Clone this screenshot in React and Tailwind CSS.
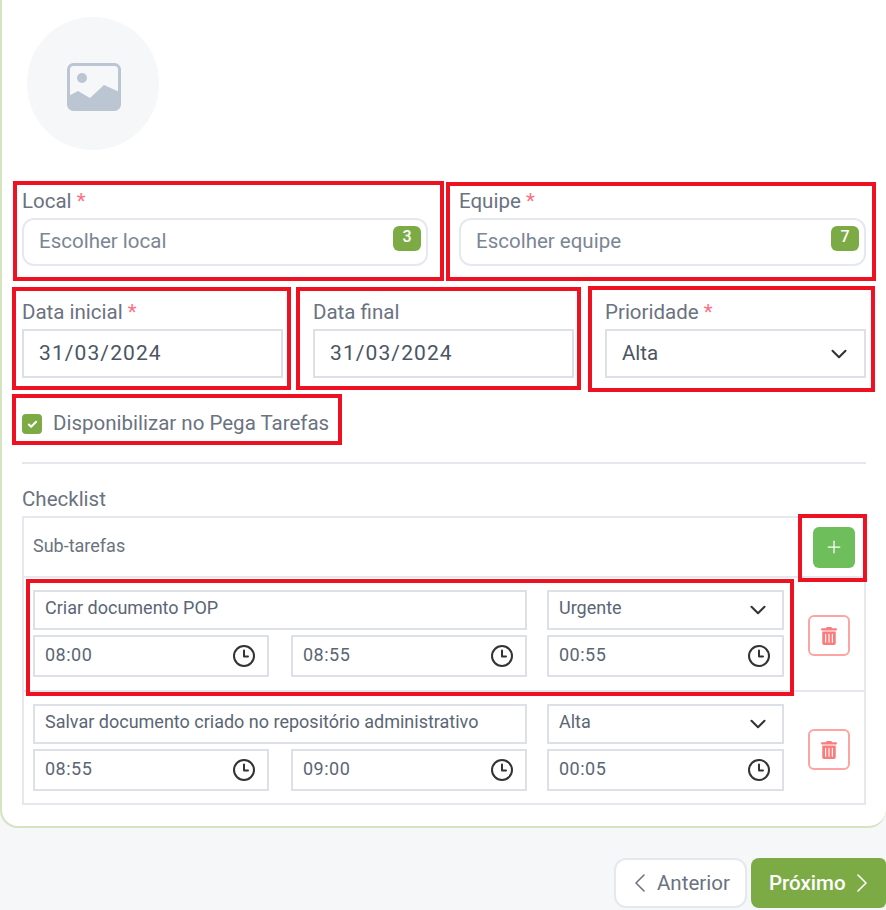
import React from 'react';
import { ChevronDown, ChevronLeft, ChevronRight, Plus, Check } from 'lucide-react';
import { FaTrashAlt } from 'react-icons/fa';

const subTasks = [
  { id: 1, name: 'Criar documento POP', priority: 'Urgente', start: '08:00', end: '08:55', total: '00:55' },
  { id: 2, name: 'Salvar documento criado no repositório administrativo', priority: 'Alta', start: '08:55', end: '09:00', total: '00:05' },
];

const ClockIcon = () => (
  <svg width="24" height="24" viewBox="0 0 24 24" fill="none" stroke="#333" strokeWidth="2" strokeLinecap="round" strokeLinejoin="round">
    <circle cx="12" cy="12" r="10" />
    <path d="M12 6.5v6h4" />
  </svg>
);

const Label = ({ children, required }) => (
  <label className="block h-[30px] pb-[4px] text-[20.5px] leading-[26px] text-[#6b7280]">
    {children} {required && <span className="text-[#fb7185]">*</span>}
  </label>
);

const PickerField = ({ label, placeholder, count }) => (
  <div>
    <Label required>{label}</Label>
    <div className="relative h-[48px] rounded-xl border-2 border-[#e5e9ef] bg-white pl-[15px] text-[20.5px] leading-[42px] text-[#7b8694]">
      {placeholder}
      <span className="absolute right-[5px] top-[6px] flex h-[25px] w-[28px] items-center justify-center rounded-md bg-[#7cab46] pb-[3px] text-[16px] font-medium leading-none text-white">
        {count}
      </span>
    </div>
  </div>
);

const DateField = ({ label, value, required }) => (
  <div>
    <Label required={required}>{label}</Label>
    <div className="h-[49px] border-2 border-[#dde1e7] bg-white pl-[15px] text-[21px] leading-[44px] tracking-[1.1px] text-[#4b5563]">{value}</div>
  </div>
);

const TimeInput = ({ value }) => (
  <div className="flex h-[42px] items-center justify-between border-2 border-[#dde1e7] bg-white pl-[10px] pr-[11px] text-[18px] tracking-[0.5px] text-[#5b6675]">
    <span className="pb-[3px]">{value}</span>
    <ClockIcon />
  </div>
);

const SubTaskRow = ({ task }) => (
  <div className="flex h-[114px] border-t-2 border-[#e5e8ed]">
    <div className="ml-[9px] mt-[12px] w-[751px]">
      <div className="grid grid-cols-[494px_237px] gap-x-[20px]">
        <div className="flex h-[40px] items-center border-2 border-[#dde1e7] pb-[5px] pl-[10px] text-[18px] text-[#5b6675]">{task.name}</div>
        <div className="flex h-[40px] items-center justify-between border-2 border-[#dde1e7] pl-[10px] pr-[11.5px] text-[18px] text-[#5b6675]">
          <span className="pb-[5px]">{task.priority}</span>
          <ChevronDown className="h-[26px] w-[26px] text-[#333]" strokeWidth={1.9} />
        </div>
      </div>
      <div className="mt-[5px] grid grid-cols-[236px_238px_237px] gap-x-[20px]">
        <TimeInput value={task.start} />
        <div className="ml-[2px]">
          <TimeInput value={task.end} />
        </div>
        <TimeInput value={task.total} />
      </div>
    </div>
    <button className="ml-[24px] mt-[37px] flex h-[41px] w-[42px] items-center justify-center rounded-md border-2 border-[#fda4a4] bg-white text-[#fb7c7c]">
      <FaTrashAlt className="h-[18px] w-[16px]" />
    </button>
  </div>
);

const App = () => {
  return (
    <div className="relative h-[910px] w-[886px] overflow-hidden bg-[#f5f7f9]" style={{ fontFamily: 'Roboto, sans-serif' }}>
      <div className="h-[828px] rounded-b-[18px] border-b-2 border-l-2 border-[#d4e4bf] bg-white pl-[20px] pr-[20px] pt-[17px]">
        {/* Foto */}
        <div className="ml-[5px] flex h-[133px] w-[132px] items-center justify-center rounded-full bg-[#f5f7f9]">
          <svg className="ml-[2px] mt-[6px]" width="54" height="48" viewBox="0 0 54 48">
            <rect x="1.5" y="1.5" width="51" height="45" rx="5" fill="none" stroke="#bcc5d2" strokeWidth="3" />
            <circle cx="15" cy="15" r="5" fill="#bcc5d2" />
            <path d="M1.5 33 L11 28 L23 35 L37 22 L52.5 29 V41 a5 5 0 0 1 -5 5 H6.5 a5 5 0 0 1 -5 -5 Z" fill="#bcc5d2" />
          </svg>
        </div>

        <div className="mt-[38px] grid grid-cols-[406px_407px] gap-x-[31px]">
          <PickerField label="Local" placeholder="Escolher local" count="3" />
          <PickerField label="Equipe" placeholder="Escolher equipe" count="7" />
        </div>

        <div className="mt-[33px] grid grid-cols-[261px_261px_262px] gap-x-[30px]">
          <DateField label="Data inicial" value="31/03/2024" required />
          <DateField label="Data final" value="31/03/2024" />
          <div className="pl-[1px]">
            <Label required>Prioridade</Label>
            <div className="flex h-[49px] items-center justify-between border-2 border-[#dde1e7] bg-white pl-[15px] pr-[12.5px] text-[20.5px] text-[#4b5563]">
              Alta
              <ChevronDown className="h-[26px] w-[26px] text-[#333]" strokeWidth={1.9} />
            </div>
          </div>
        </div>

        <div className="mt-[36px] flex h-[20px] items-center">
          <span className="flex h-[20px] w-[20px] items-center justify-center rounded bg-[#7cab46]">
            <Check className="h-[11px] w-[11px] text-white" strokeWidth={4.5} />
          </span>
          <span className="ml-[11px] pb-[2px] text-[20.5px] text-[#6b7280]">Disponibilizar no Pega Tarefas</span>
        </div>

        <hr className="mt-[28px] border-t-2 border-[#e5e8ed]" />

        <div className="mt-[22px] h-[26px] text-[20.5px] leading-[26px] text-[#6b7280]">Checklist</div>

        {/* Sub-tarefas */}
        <div className="mt-[4px] h-[289px] border-2 border-[#e5e8ed]">
          <div className="flex h-[58px] items-center justify-between pl-[9px] pr-[9px]">
            <span className="pb-[4px] text-[18px] text-[#6b7280]">Sub-tarefas</span>
            <button className="flex h-[41px] w-[42px] items-center justify-center rounded-md bg-[#6fbe5c] text-white">
              <Plus className="h-[20px] w-[20px]" strokeWidth={1.5} />
            </button>
          </div>
          {subTasks.map((task) => (
            <SubTaskRow key={task.id} task={task} />
          ))}
        </div>
      </div>

      <div className="flex justify-end pt-[30px]">
        <button className="flex h-[50px] w-[133px] items-center justify-start gap-[1px] rounded-xl border-2 border-[#e5e8ed] bg-white pl-[8px] text-[20.5px] text-[#6b7280]">
          <ChevronLeft className="h-[32px] w-[32px]" strokeWidth={1.2} />
          Anterior
        </button>
        <button className="ml-[4px] flex h-[50px] w-[135px] items-center justify-start rounded-l-lg rounded-r-md bg-[#7cab46] pl-[18px] text-[20.5px] font-medium text-white">
          Próximo
          <ChevronRight className="h-[32px] w-[32px]" strokeWidth={1.2} />
        </button>
      </div>

      {/* marcações em vermelho sobre a tela */}
      <div className="absolute left-[13px] top-[181px] h-[100px] w-[431px] border-[4px] border-[#ee1122]" />
      <div className="absolute left-[446px] top-[182px] h-[99px] w-[430px] border-[4px] border-[#ee1122]" />
      <div className="absolute left-[12px] top-[287px] h-[103px] w-[279px] border-[4px] border-[#ee1122]" />
      <div className="absolute left-[296px] top-[287px] h-[103px] w-[285px] border-[4px] border-[#ee1122]" />
      <div className="absolute left-[588px] top-[286px] h-[106px] w-[287px] border-[4px] border-[#ee1122]" />
      <div className="absolute left-[12px] top-[394px] h-[51px] w-[330px] border-[4px] border-[#ee1122]" />
      <div className="absolute left-[798px] top-[514px] h-[68px] w-[69px] border-[4px] border-[#ee1122]" />
      <div className="absolute left-[26px] top-[579px] h-[117px] w-[768px] border-[4px] border-[#ee1122]" />
    </div>
  );
};

export default App;
